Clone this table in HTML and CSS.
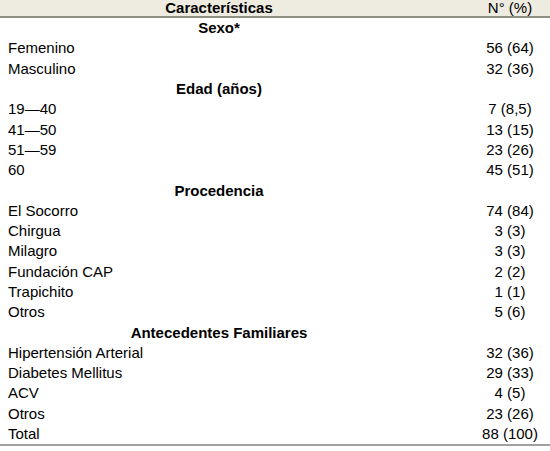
FILE: index.html
```html
<!DOCTYPE html>
<html lang="es">
<head>
<meta charset="utf-8">
<link rel="stylesheet" href="styles.css">
</head>
<body>
<table class="tbl">
  <thead>
    <tr class="head">
      <th class="c1">Características</th>
      <th class="c2">N° (%)</th>
    </tr>
  </thead>
  <tbody>
    <tr class="sec"><td class="c1">Sexo*</td><td class="c2"></td></tr>
    <tr><td class="lbl">Femenino</td><td class="c2">56 (64)</td></tr>
    <tr><td class="lbl">Masculino</td><td class="c2">32 (36)</td></tr>
    <tr class="sec"><td class="c1">Edad (años)</td><td class="c2"></td></tr>
    <tr><td class="lbl">19—40</td><td class="c2">7 (8,5)</td></tr>
    <tr><td class="lbl">41—50</td><td class="c2">13 (15)</td></tr>
    <tr><td class="lbl">51—59</td><td class="c2">23 (26)</td></tr>
    <tr><td class="lbl">60</td><td class="c2">45 (51)</td></tr>
    <tr class="sec"><td class="c1">Procedencia</td><td class="c2"></td></tr>
    <tr><td class="lbl">El Socorro</td><td class="c2">74 (84)</td></tr>
    <tr><td class="lbl">Chirgua</td><td class="c2">3 (3)</td></tr>
    <tr><td class="lbl">Milagro</td><td class="c2">3 (3)</td></tr>
    <tr><td class="lbl">Fundación CAP</td><td class="c2">2 (2)</td></tr>
    <tr><td class="lbl">Trapichito</td><td class="c2">1 (1)</td></tr>
    <tr><td class="lbl">Otros</td><td class="c2">5 (6)</td></tr>
    <tr class="sec"><td class="c1">Antecedentes Familiares</td><td class="c2"></td></tr>
    <tr><td class="lbl">Hipertensión Arterial</td><td class="c2">32 (36)</td></tr>
    <tr><td class="lbl">Diabetes Mellitus</td><td class="c2">29 (33)</td></tr>
    <tr><td class="lbl">ACV</td><td class="c2">4 (5)</td></tr>
    <tr><td class="lbl">Otros</td><td class="c2">23 (26)</td></tr>
    <tr class="last"><td class="lbl">Total</td><td class="c2">88 (100)</td></tr>
  </tbody>
</table>
</body>
</html>
```
FILE: styles.css
```css
html, body {
  margin: 0;
  padding: 0;
  background: #ffffff;
}
body {
  font-family: "Liberation Sans", Arial, sans-serif;
  font-size: 15px;
  color: #000000;
}
.tbl {
  width: 550px;
  border-collapse: collapse;
  table-layout: fixed;
}
.tbl td, .tbl th {
  padding: 0;
  height: 20.3px;
  line-height: 20px;
  white-space: nowrap;
}
.head th {
  background: #eeebe0;
  height: 16px;
  line-height: 16px;
  border-bottom: 2px solid #8c9182;
}
.c1 {
  width: 438px;
  text-align: center;
  font-weight: bold;
}
.c2 {
  text-align: center;
  padding-left: 32px !important;
  font-weight: normal;
}
.head .c2 {
  font-weight: normal;
}
.lbl {
  text-align: left;
  padding-left: 8px !important;
}
.last td {
  border-bottom: 2px solid #a0a0a0;
}
```
